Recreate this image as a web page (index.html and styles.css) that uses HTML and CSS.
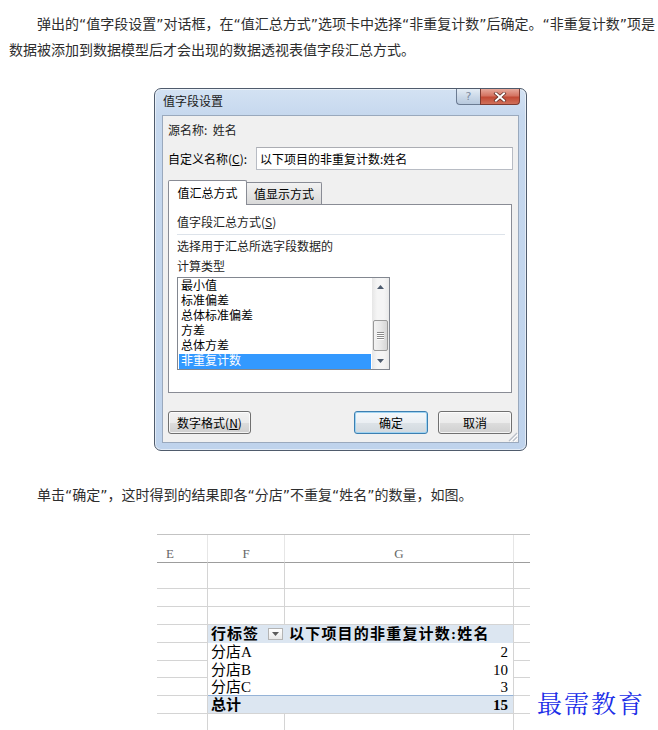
FILE: index.html
```html
<!DOCTYPE html>
<html lang="zh-CN">
<head>
<meta charset="utf-8">
<title>值字段设置</title>
<link rel="stylesheet" href="styles.css">
</head>
<body>
<div class="page">
  <p class="para first">弹出的“值字段设置”对话框，在“值汇总方式”选项卡中选择“非重复计数”后确定。“非重复计数”项是数据被添加到数据模型后才会出现的数据透视表值字段汇总方式。</p>

  <div class="dialog">
    <div class="titlebar">
      <span class="title">值字段设置</span>
      <div class="caption-btns">
        <span class="cbtn help">?</span>
        <span class="cbtn close">
          <svg width="14" height="10" viewBox="0 0 14 10"><path d="M3 1.5 L11 8.5 M11 1.5 L3 8.5" stroke="#5a2a22" stroke-width="3.4" stroke-linecap="square"/><path d="M3 1.5 L11 8.5 M11 1.5 L3 8.5" stroke="#ffffff" stroke-width="2" stroke-linecap="square"/></svg>
        </span>
      </div>
    </div>
    <div class="client">
      <div class="src">源名称:&nbsp;&nbsp;姓名</div>
      <div class="name-row">
        <span class="lbl">自定义名称(<u>C</u>):</span>
        <div class="textbox">以下项目的非重复计数:姓名</div>
      </div>
      <div class="tabs">
        <div class="tab active">值汇总方式</div>
        <div class="tab">值显示方式</div>
      </div>
      <div class="pane">
        <div class="group">值字段汇总方式(<u>S</u>)</div>
        <div class="sep"></div>
        <div class="desc">选择用于汇总所选字段数据的<br>计算类型</div>
        <div class="listbox">
          <ul class="items">
            <li>最小值</li>
            <li>标准偏差</li>
            <li>总体标准偏差</li>
            <li>方差</li>
            <li>总体方差</li>
            <li class="sel">非重复计数</li>
          </ul>
          <div class="scrollbar">
            <div class="arrow"><svg width="7" height="4" viewBox="0 0 7 4"><path d="M0 4 L3.5 0 L7 4 Z" fill="#4d5b6e"/></svg></div>
            <div class="track"></div>
            <div class="thumb"><span></span><span></span><span></span><span></span></div>
            <div class="arrow"><svg width="7" height="4" viewBox="0 0 7 4"><path d="M0 0 L3.5 4 L7 0 Z" fill="#4d5b6e"/></svg></div>
          </div>
        </div>
      </div>
      <div class="btn-row">
        <div class="btn wide">数字格式(<u>N</u>)</div>
        <div class="btn-group">
          <div class="btn default">确定</div>
          <div class="btn">取消</div>
        </div>
      </div>
      <svg class="grip" width="12" height="12" viewBox="0 0 12 12">
        <path d="M11 3 L3 11 M11 7 L7 11" stroke="#b8bec8" stroke-width="1.2"/>
        <path d="M12 4 L4 12 M12 8 L8 12" stroke="#ffffff" stroke-width="1"/>
      </svg>
    </div>
  </div>

  <p class="para second">单击“确定”，这时得到的结果即各“分店”不重复“姓名”的数量，如图。</p>

  <div class="sheet">
    <div class="cell hd e">E</div><div class="cell hd">F</div><div class="cell hd">G</div><div class="cell hd last"></div>

    <div class="cell"></div><div class="cell"></div><div class="cell"></div><div class="cell last"></div>
    <div class="cell"></div><div class="cell"></div><div class="cell"></div><div class="cell last"></div>
    <div class="cell"></div><div class="cell"></div><div class="cell"></div><div class="cell last"></div>

    <div class="cell"></div>
    <div class="cell pv f head"><span>行标签</span><span class="dd"><svg width="7" height="4" viewBox="0 0 7 4"><path d="M0 0 L3.5 4 L7 0 Z" fill="#5b5b5b"/></svg></span></div>
    <div class="cell pv g head">以下项目的非重复计数:姓名</div>
    <div class="cell last"></div>

    <div class="cell"></div><div class="cell pv f">分店A</div><div class="cell pv g">2</div><div class="cell last"></div>
    <div class="cell"></div><div class="cell pv f">分店B</div><div class="cell pv g">10</div><div class="cell last"></div>
    <div class="cell"></div><div class="cell pv f sub">分店C</div><div class="cell pv g sub">3</div><div class="cell last"></div>

    <div class="cell"></div><div class="cell pv f total">总计</div><div class="cell pv g total">15</div><div class="cell last"></div>

    <div class="cell"></div><div class="cell"></div><div class="cell"></div><div class="cell last"></div>
  </div>

  <div class="watermark">最需教育</div>
</div>
</body>
</html>
```

FILE: styles.css
```css
html, body {
  margin: 0;
  padding: 0;
  background: #ffffff;
}

.page {
  position: relative;
  width: 658px;
  height: 730px;
  overflow: hidden;
}

.para {
  margin: 0;
  padding: 0 0 0 9px;
  font-family: "DejaVu Sans", "Noto Sans CJK SC", sans-serif;
  font-size: 14px;
  line-height: 26px;
  color: #2e2e2e;
  text-indent: 28px;
}

.para.first {
  margin-top: 11px;
}

.para.second {
  margin-top: 31px;
}

/* ---------- dialog ---------- */
.dialog {
  box-sizing: border-box;
  width: 373px;
  height: 363px;
  margin: 25px 0 0 154px;
  border: 1px solid #4f5b6c;
  border-radius: 7px;
  padding: 0 7px 7px 7px;
  background: linear-gradient(#d3e2f3 0px, #c6d8ee 26px, #bfd3ec 100%);
  box-shadow: inset 0 0 0 1px rgba(255, 255, 255, 0.55);
  display: flex;
  flex-direction: column;
  font-family: "Noto Sans CJK SC", sans-serif;
  font-size: 12px;
  color: #000;
}

.titlebar {
  height: 26px;
  flex: none;
  display: flex;
  justify-content: space-between;
  align-items: flex-start;
}

.title {
  padding-left: 1px;
  line-height: 24px;
  color: #1b1b1b;
}

.caption-btns {
  display: flex;
  margin-right: -1px;
}

.cbtn {
  box-sizing: border-box;
  height: 16px;
  display: flex;
  align-items: center;
  justify-content: center;
  border: 1px solid #6b7b92;
  border-top: none;
}

.help {
  width: 24px;
  border-radius: 0 0 0 4px;
  border-right: none;
  background: linear-gradient(#e4ecf5, #c9d7e7 55%, #b8c9dd);
  font-family: "DejaVu Sans", sans-serif;
  font-size: 11px;
  line-height: 14px;
  color: #7d8ba0;
}

.close {
  width: 40px;
  border-color: #7e3b31;
  border-radius: 0 0 4px 0;
  background: linear-gradient(#e7a99b, #d47462 45%, #c24a35 55%, #d0705a);
}

.client {
  position: relative;
  flex: 1;
  box-sizing: border-box;
  border: 1px solid #9aa9bd;
  background: #f0f0f0;
  padding: 0 6px 0 5px;
}

.src {
  margin-top: 6px;
  line-height: 16px;
  color: #1e1e1e;
}

.name-row {
  margin-top: 9px;
  display: flex;
  align-items: center;
  height: 23px;
}

.lbl {
  width: 88px;
  flex: none;
}

.textbox {
  flex: 1;
  box-sizing: border-box;
  height: 23px;
  margin-right: -1px;
  border: 1px solid #b8bcc4;
  border-top-color: #abadb3;
  background: #ffffff;
  padding-left: 3px;
  line-height: 21px;
}

.tabs {
  margin-top: 10px;
  display: flex;
  align-items: flex-end;
  position: relative;
  z-index: 1;
}

.tab {
  box-sizing: border-box;
  text-align: center;
  border: 1px solid #898c95;
  border-bottom: none;
}

.tab.active {
  width: 79px;
  height: 25px;
  margin-bottom: -1px;
  background: #ffffff;
  line-height: 24px;
  border-radius: 2px 2px 0 0;
}

.tab:not(.active) {
  width: 75px;
  height: 22px;
  border-left: none;
  background: linear-gradient(#f2f2f2, #e6e6e6 50%, #d9d9d9);
  line-height: 21px;
  border-radius: 0 2px 0 0;
}

.pane {
  box-sizing: border-box;
  height: 189px;
  border: 1px solid #898c95;
  background: #ffffff;
  padding: 9px 6px 0 8px;
}

.group {
  line-height: 16px;
  color: #1e1e1e;
}

.sep {
  margin-top: 4px;
  height: 1px;
  background: #dde3ea;
}

.desc {
  margin-top: 1px;
  line-height: 20px;
  color: #1e1e1e;
}

.listbox {
  margin-top: 1px;
  box-sizing: border-box;
  width: 213px;
  height: 93px;
  border: 1px solid #828790;
  background: #ffffff;
  display: flex;
}

.items {
  list-style: none;
  margin: 0;
  padding: 1px 1px 0 1px;
  flex: 1;
  font-family: "DejaVu Sans", "Noto Sans CJK SC", sans-serif;
}

.items li {
  height: 15px;
  line-height: 15px;
  padding-left: 2px;
  color: #000;
  white-space: nowrap;
  overflow: hidden;
}

.items li.sel {
  background: #3399ff;
  color: #ffffff;
}

.scrollbar {
  width: 17px;
  flex: none;
  display: flex;
  flex-direction: column;
  background: linear-gradient(90deg, #e6e6e6, #f5f5f5 30%, #f5f5f5 70%, #e9e9e9);
}

.arrow {
  height: 17px;
  flex: none;
  display: flex;
  align-items: center;
  justify-content: center;
}

.track {
  flex: 1;
}

.thumb {
  box-sizing: border-box;
  height: 31px;
  margin: 0 1px 1px 1px;
  border: 1px solid #999999;
  border-radius: 2px;
  background: linear-gradient(90deg, #f3f3f3, #e8e8e8 50%, #d6d6d6);
  display: flex;
  flex-direction: column;
  justify-content: center;
  align-items: center;
  gap: 1px;
}

.thumb span {
  width: 7px;
  height: 1px;
  background: #8a8a8a;
  box-shadow: 0 1px 0 #ffffff;
}

.btn-row {
  margin-top: 18px;
  display: flex;
  justify-content: space-between;
}

.btn-group {
  display: flex;
  gap: 10px;
}

.btn {
  box-sizing: border-box;
  width: 74px;
  height: 23px;
  border: 1px solid #707070;
  border-radius: 3px;
  background: linear-gradient(#f2f2f2, #ebebeb 50%, #dddddd 51%, #cfcfcf);
  box-shadow: inset 0 0 0 1px rgba(255, 255, 255, 0.75);
  text-align: center;
  line-height: 21px;
  color: #000;
}

.btn.wide {
  width: 83px;
}

.btn.default {
  border-color: #3c7fb1;
  box-shadow: inset 0 0 0 1px #9fd3f1;
  background: linear-gradient(#f4f8fb, #ebeff3 50%, #dde3e8 51%, #d2d9df);
}

.grip {
  position: absolute;
  right: 0;
  bottom: 0;
}

/* ---------- sheet ---------- */
.sheet {
  margin: 26px 0 0 157px;
  width: 373px;
  border-top: 1px solid #c3c3c3;
  display: grid;
  grid-template-columns: 51px 77px 229px 16px;
  grid-template-rows: 28px 26px 18px 18px 18px 18px 17px 18px 18px 18px;
}

.cell {
  box-sizing: border-box;
  border-right: 1px solid #d4d4d4;
  border-bottom: 1px solid #d4d4d4;
  background: #ffffff;
}

.cell.last {
  border-right: none;
}

.hd {
  border-bottom-color: #9d9d9d;
  border-right-color: #e6e6e6;
  display: flex;
  align-items: flex-end;
  justify-content: center;
  padding-bottom: 1px;
  font-family: "Liberation Serif", serif;
  font-size: 13px;
  line-height: 15px;
  color: #666666;
}

.hd.e {
  justify-content: flex-start;
  padding-left: 9px;
}

.pv {
  border-bottom: none;
  display: flex;
  align-items: center;
  font-family: "Liberation Serif", "Noto Sans CJK SC", serif;
  font-size: 15px;
  line-height: 18px;
  color: #000000;
  white-space: nowrap;
}

.pv.f {
  border-right: none;
  padding-left: 3px;
}

.pv.g {
  justify-content: flex-end;
  padding-right: 5px;
}

.pv.head {
  background: #dce6f1;
  font-weight: bold;
}

.pv.f.head {
  justify-content: space-between;
  padding-right: 2px;
  letter-spacing: 1px;
}

.pv.g.head {
  justify-content: flex-start;
  padding-left: 4px;
  letter-spacing: 1.2px;
}

.dd {
  box-sizing: border-box;
  width: 15px;
  height: 12px;
  border: 1px solid #b4b4b4;
  background: linear-gradient(#ffffff, #e9e9e9);
  display: flex;
  align-items: center;
  justify-content: center;
  letter-spacing: 0;
}

.pv.sub {
  border-bottom: 1px solid #95b3d7;
}

.pv.total {
  background: #dce6f1;
  font-weight: bold;
  border-bottom: 1px solid #d4d4d4;
}

/* ---------- watermark ---------- */
.watermark {
  position: absolute;
  left: 537px;
  top: 687px;
  font-family: "Noto Serif CJK SC", "Noto Sans CJK SC", serif;
  font-size: 25px;
  line-height: 30px;
  letter-spacing: 2px;
  color: #1b2ee8;
}
```
